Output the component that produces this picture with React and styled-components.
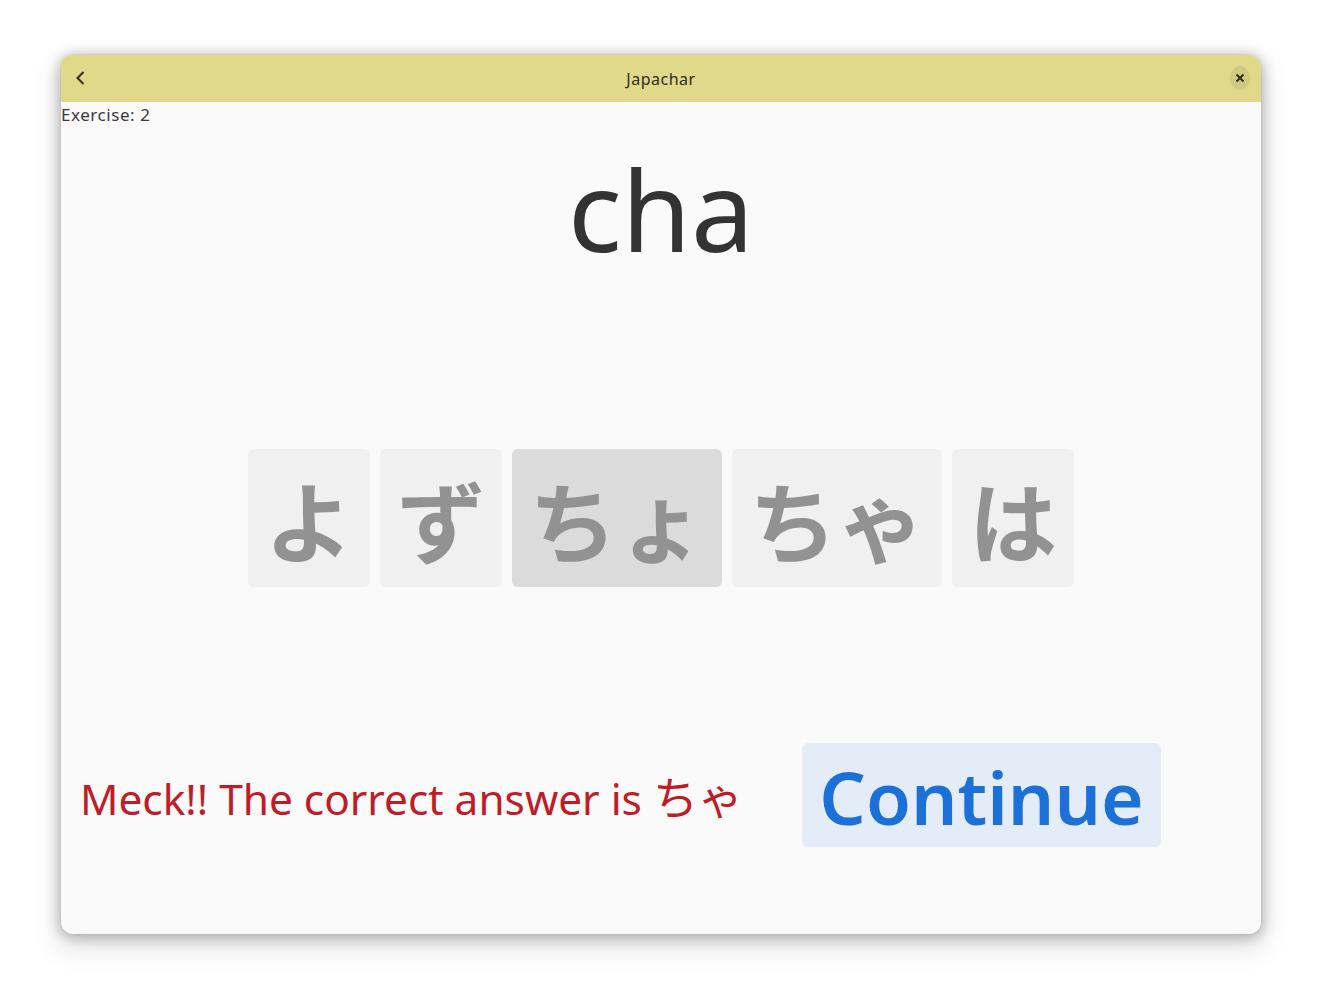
import React from 'react';
import styled, { createGlobalStyle } from 'styled-components';

const GlobalStyle = createGlobalStyle`
  html, body {
    margin: 0;
    padding: 0;
    background: #fff;
  }
  body {
    font-family: "Noto Sans", "Noto Sans CJK JP", sans-serif;
    color: #333;
  }
`;

const options = [
  { label: 'よ' },
  { label: 'ず' },
  { label: 'ちょ', wrong: true },
  { label: 'ちゃ' },
  { label: 'は' },
];

export default function App() {
  return (
    <Page>
      <GlobalStyle />
      <Window>
        <HeaderBar>
          <BackButton aria-label="Back">
            <svg width="16" height="16" viewBox="0 0 16 16" fill="none">
              <path d="M11.5 2 L5.5 8 L11.5 14" stroke="#2e2c1e" strokeWidth="2" />
            </svg>
          </BackButton>
          <Title>Japachar</Title>
          <CloseButton aria-label="Close">
            <svg width="16" height="16" viewBox="0 0 16 16" fill="none">
              <path d="M4.5 4.5 L11.5 11.5 M11.5 4.5 L4.5 11.5" stroke="#2e2c1e" strokeWidth="2" />
            </svg>
          </CloseButton>
        </HeaderBar>
        <Content>
          <Counter>Exercise: 2</Counter>
          <Syllable>cha</Syllable>
          <Choices>
            {options.map(o => (
              <Choice key={o.label} $wrong={o.wrong}>{o.label}</Choice>
            ))}
          </Choices>
          <Feedback>
            <Message>Meck!! The correct answer is <Kana>ちゃ</Kana></Message>
            <ContinueButton>Continue</ContinueButton>
          </Feedback>
        </Content>
      </Window>
    </Page>
  );
}

const Page = styled.div`
  width: 1322px;
  height: 1001px;
  padding: 55px 61px 0;
  box-sizing: border-box;
  overflow: hidden;
`;

const Window = styled.div`
  width: 1200px;
  height: 879px;
  border-radius: 12px;
  overflow: hidden;
  background: #fafafa;
  box-shadow: 0 0 0 1px rgba(0, 0, 0, 0.04), 0 2px 14px 2px rgba(0, 0, 0, 0.26), 0 12px 28px 4px rgba(0, 0, 0, 0.1);
`;

const HeaderBar = styled.header`
  height: 47px;
  box-sizing: border-box;
  background: #e0d98a;
  display: flex;
  align-items: center;
  justify-content: space-between;
  padding: 0 11px 2px 11px;
  position: relative;
`;

const Title = styled.div`
  position: absolute;
  left: 0;
  right: 0;
  margin-top: 2px;
  text-align: center;
  font-size: 16px;
  letter-spacing: 0.5px;
  color: #2e2c1e;
  pointer-events: none;
`;

const BackButton = styled.button`
  width: 16px;
  height: 16px;
  padding: 0;
  border: 0;
  background: none;
  display: flex;
`;

const CloseButton = styled.button`
  width: 20px;
  height: 24px;
  margin-top: 1px;
  padding: 0;
  border: 0;
  border-radius: 50%;
  background: #d0ca80;
  display: flex;
  align-items: center;
  justify-content: center;
`;

const Content = styled.main`
  display: flex;
  flex-direction: column;
`;

const Counter = styled.div`
  font-size: 17px;
  letter-spacing: 0.55px;
  line-height: 24px;
  height: 24px;
  margin-top: 1px;
  color: #3a3a3a;
`;

const Syllable = styled.div`
  font-size: 112px;
  line-height: 152px;
  height: 152px;
  text-align: center;
  color: #333;
  margin-top: 6px;
`;

const Choices = styled.div`
  display: flex;
  justify-content: center;
  gap: 10px;
  margin-top: 164px;
`;

const Choice = styled.button`
  height: 138px;
  padding: 0 17px;
  box-sizing: border-box;
  border: 0;
  border-radius: 6px;
  background: ${p => (p.$wrong ? '#dbdbdb' : '#f0f0f0')};
  color: #929292;
  font-family: "Noto Sans CJK JP", sans-serif;
  font-weight: 700;
  font-size: 88px;
  line-height: 1;
  display: flex;
  align-items: center;
  justify-content: center;
`;

const Feedback = styled.div`
  display: flex;
  align-items: center;
  margin-top: 156px;
  padding-left: 19px;
`;

const Message = styled.div`
  width: 722px;
  font-size: 42.4px;
  line-height: 60px;
  padding-top: 6px;
  color: #c01c28;
  white-space: nowrap;
`;

const Kana = styled.span`
  font-size: 45px;
`;

const ContinueButton = styled.button`
  width: 359px;
  height: 104px;
  padding: 2px 0 0;
  box-sizing: border-box;
  border: 0;
  border-radius: 6px;
  background: #e4ecf8;
  color: #1c71d8;
  font-family: "Noto Sans", sans-serif;
  font-weight: 600;
  font-size: 73px;
  line-height: 1;
`;
